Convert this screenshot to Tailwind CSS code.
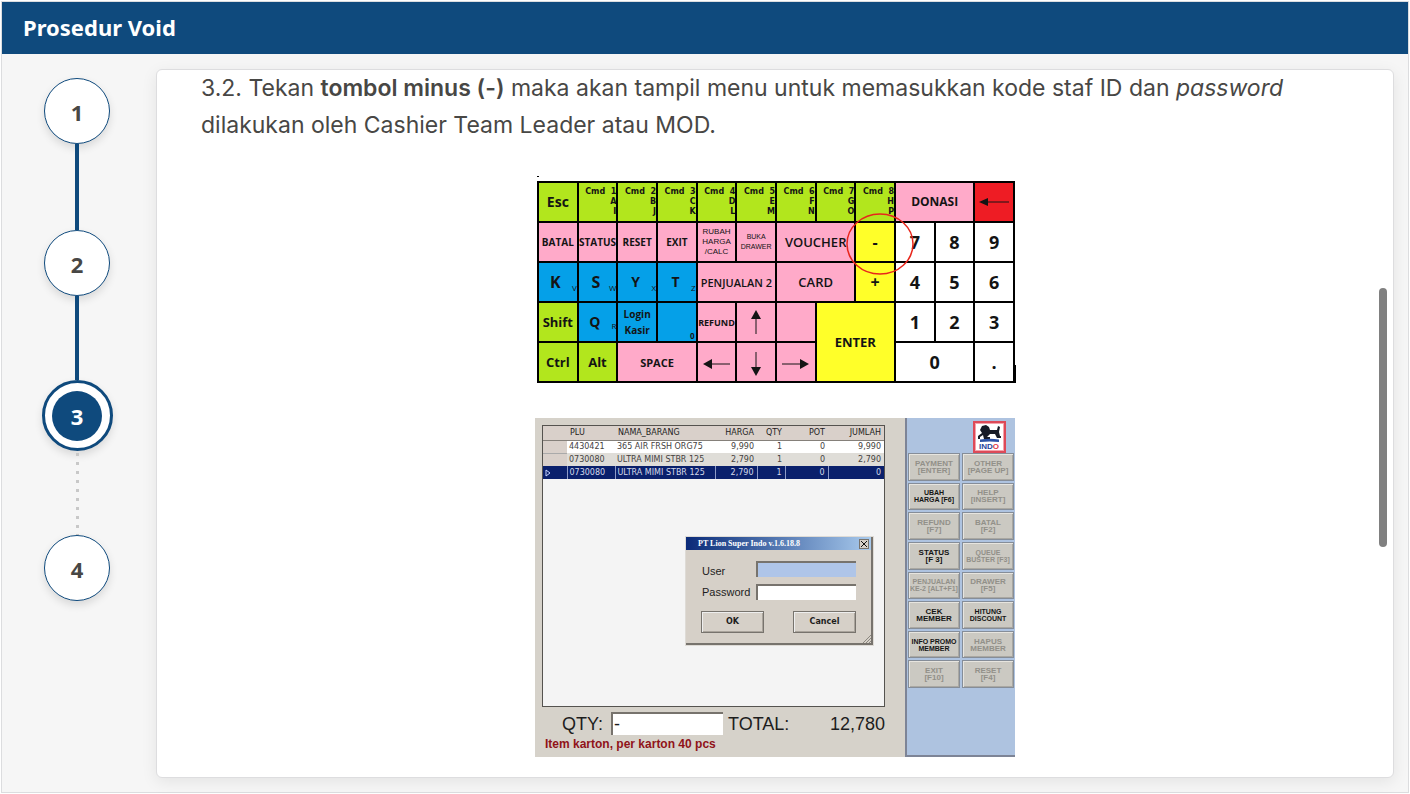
<!DOCTYPE html>
<html lang="id">
<head>
<meta charset="utf-8">
<meta name="viewport" content="width=device-width, initial-scale=1">
<title>Prosedur Void</title>
<script src="https://cdn.jsdelivr.net/npm/@tailwindcss/browser@4"></script>
</head>
<body class="bg-white">
<div class="flex min-h-screen flex-col p-px">
<div class="flex flex-1 flex-col border border-[#dcdddf] bg-[#f6f6f6]">
  <header class="flex h-[52px] items-center bg-[#0f4a7d] px-[21px]">
    <h1 class="pb-[2px] font-['Noto_Sans',sans-serif] text-[22px] font-bold text-white">Prosedur Void</h1>
  </header>
  <div class="flex flex-1 pt-[15px] pr-[14px] pb-[14px]">
    <nav aria-label="Langkah" class="flex w-[154px] shrink-0 flex-col items-center pt-[9px] pr-1 font-['Noto_Sans',sans-serif] text-[22px] font-bold text-[#484745]">
      <button class="size-[66px] shrink-0 rounded-full border border-[#0f4a7d] bg-white pt-[2px] shadow-[0_4px_8px_rgba(0,0,0,0.12)]">1</button>
      <div class="h-[86px] w-1 shrink-0 bg-[#0f4a7d]"></div>
      <button class="size-[66px] shrink-0 rounded-full border border-[#0f4a7d] bg-white pt-[2px] shadow-[0_4px_8px_rgba(0,0,0,0.12)]">2</button>
      <div class="h-[84px] w-1 shrink-0 bg-[#0f4a7d]"></div>
      <button aria-current="step" class="flex size-[71px] shrink-0 items-center justify-center rounded-full border-[3px] border-[#0f4a7d] bg-white text-white shadow-[0_4px_8px_rgba(0,0,0,0.12)]"><span class="flex size-[50px] items-center justify-center rounded-full bg-[#0f4a7d] pt-[2px]">3</span></button>
      <div class="h-[84px] w-[3px] shrink-0 bg-[repeating-linear-gradient(to_bottom,transparent_0_2px,#c8c8c8_2px_5px,transparent_5px_9px)]"></div>
      <button class="size-[66px] shrink-0 rounded-full border border-[#0f4a7d] bg-white pt-[2px] shadow-[0_4px_8px_rgba(0,0,0,0.12)]">4</button>
    </nav>

    <main id="isi" class="relative flex min-w-0 flex-1 flex-col items-center rounded-md border border-[#dddddf] bg-white pb-5 shadow-[0_4px_16px_rgba(0,0,0,0.08)]">
      <p class="w-full px-11 font-[Inter,sans-serif] text-[23px] leading-[37px] text-[#484745]">3.2. Tekan <b class="font-semibold">tombol minus (-)</b> maka akan tampil menu untuk memasukkan kode staf ID dan <i>password</i><br>dilakukan oleh Cashier Team Leader atau MOD.</p>

      <!-- Cash register keyboard -->
      <div class="mt-8 flex w-[482px] items-end pl-[3px]">
        <div class="flex-1">
          <div class="mb-1 h-px w-[2px] bg-black"></div>
          <div class="relative grid w-[478px] grid-cols-12 grid-rows-[repeat(5,38px)] gap-[2px] bg-black p-[2px] font-['Open_Sans',sans-serif] text-[11px] leading-none font-bold text-[#141414] [&>button]:min-w-0 [&>button]:overflow-hidden [&>button]:whitespace-nowrap">
            <button class="bg-[#b2e61d] text-sm leading-none">Esc</button>
            <button class="bg-[#b2e61d] text-right font-['DejaVu_Sans',sans-serif] text-[8px] leading-[10px]">Cmd&nbsp; 1<br>A<br>I</button>
            <button class="bg-[#b2e61d] text-right font-['DejaVu_Sans',sans-serif] text-[8px] leading-[10px]">Cmd&nbsp; 2<br>B<br>J</button>
            <button class="bg-[#b2e61d] text-right font-['DejaVu_Sans',sans-serif] text-[8px] leading-[10px]">Cmd&nbsp; 3<br>C<br>K</button>
            <button class="bg-[#b2e61d] text-right font-['DejaVu_Sans',sans-serif] text-[8px] leading-[10px]">Cmd&nbsp; 4<br>D<br>L</button>
            <button class="bg-[#b2e61d] text-right font-['DejaVu_Sans',sans-serif] text-[8px] leading-[10px]">Cmd&nbsp; 5<br>E<br>M</button>
            <button class="bg-[#b2e61d] text-right font-['DejaVu_Sans',sans-serif] text-[8px] leading-[10px]">Cmd&nbsp; 6<br>F<br>N</button>
            <button class="bg-[#b2e61d] text-right font-['DejaVu_Sans',sans-serif] text-[8px] leading-[10px]">Cmd&nbsp; 7<br>G<br>O</button>
            <button class="bg-[#b2e61d] text-right font-['DejaVu_Sans',sans-serif] text-[8px] leading-[10px]">Cmd&nbsp; 8<br>H<br>P</button>
            <button class="col-span-2 bg-[#ffaac9] text-xs leading-none">DONASI</button>
            <button aria-label="Hapus" class="flex items-center justify-center bg-[#ee1c24]"><svg width="30" height="10" viewBox="0 0 30 10"><path d="M8 5H30" stroke="#141414"/><path d="M0 5l9-4v8z" fill="#141414"/></svg></button>

            <button class="bg-[#ffaac9] text-[10px]">BATAL</button>
            <button class="bg-[#ffaac9] text-[10px]">STATUS</button>
            <button class="bg-[#ffaac9] text-[10px]">RESET</button>
            <button class="bg-[#ffaac9] text-[10px]">EXIT</button>
            <button class="bg-[#ffaac9] font-['Liberation_Sans',sans-serif] text-[8px] leading-[10px] font-normal">RUBAH<br>HARGA<br>/CALC</button>
            <button class="bg-[#ffaac9] font-['Liberation_Sans',sans-serif] text-[7px] leading-[10px] font-normal">BUKA<br>DRAWER</button>
            <button class="col-span-2 bg-[#ffaac9] text-[13px] font-semibold">VOUCHER</button>
            <button class="bg-[#ffff29] text-base">-</button>
            <button class="bg-white text-lg">7</button>
            <button class="bg-white text-lg">8</button>
            <button class="bg-white text-lg">9</button>

            <button class="flex items-center justify-end bg-[#05a0e8] text-base leading-none">K<span class="mt-3 ml-1 w-3 text-right text-[8px] font-normal">V</span></button>
            <button class="flex items-center justify-end bg-[#05a0e8] text-base leading-none">S<span class="mt-3 ml-1 w-3 text-right text-[8px] font-normal">W</span></button>
            <button class="flex items-center justify-end bg-[#05a0e8] text-sm leading-none">Y<span class="mt-3 ml-1 w-3 text-right text-[8px] font-normal">X</span></button>
            <button class="flex items-center justify-end bg-[#05a0e8] text-sm leading-none">T<span class="mt-3 ml-1 w-3 text-right text-[8px] font-normal">Z</span></button>
            <button class="col-span-2 bg-[#ffaac9] text-[11px] font-semibold">PENJUALAN 2</button>
            <button class="col-span-2 bg-[#ffaac9] text-[13px] font-semibold">CARD</button>
            <button class="bg-[#ffff29] text-base">+</button>
            <button class="bg-white text-lg">4</button>
            <button class="bg-white text-lg">5</button>
            <button class="bg-white text-lg">6</button>

            <button class="bg-[#b2e61d] text-[13px]">Shift</button>
            <button class="flex items-center justify-end bg-[#05a0e8] text-sm leading-none">Q<span class="mt-2 ml-1 w-3 text-right text-[8px] font-normal">R</span></button>
            <button class="bg-[#05a0e8] text-[10px] leading-4">Login<br>Kasir</button>
            <button class="flex items-end justify-end bg-[#05a0e8] p-px text-[8px]">0</button>
            <button class="bg-[#ffaac9] text-[9px]">REFUND</button>
            <button aria-label="Atas" class="flex items-center justify-center bg-[#ffaac9]"><svg width="10" height="24" viewBox="0 0 10 24"><path d="M5 8V24" stroke="#141414"/><path d="M5 0l5 9H0z" fill="#141414"/></svg></button>
            <button aria-label="Kosong" class="bg-[#ffaac9]"></button>
            <button class="col-span-2 row-span-2 bg-[#ffff29] text-[13px]">ENTER</button>
            <button class="bg-white text-lg">1</button>
            <button class="bg-white text-lg">2</button>
            <button class="bg-white text-lg">3</button>

            <button class="bg-[#b2e61d] text-[13px]">Ctrl</button>
            <button class="bg-[#b2e61d] text-[13px]">Alt</button>
            <button class="col-span-2 bg-[#ffaac9]">SPACE</button>
            <button aria-label="Kiri" class="flex items-center justify-center bg-[#ffaac9] pt-1"><svg width="27" height="10" viewBox="0 0 27 10"><path d="M8 5H27" stroke="#141414"/><path d="M0 5l9-5v10z" fill="#141414"/></svg></button>
            <button aria-label="Bawah" class="flex items-center justify-center bg-[#ffaac9] pt-1"><svg width="10" height="24" viewBox="0 0 10 24"><path d="M5 0V16" stroke="#141414"/><path d="M5 24l5-9H0z" fill="#141414"/></svg></button>
            <button aria-label="Kanan" class="flex items-center justify-center bg-[#ffaac9] pt-1"><svg width="27" height="10" viewBox="0 0 27 10"><path d="M0 5H19" stroke="#141414"/><path d="M27 5l-9-5v10z" fill="#141414"/></svg></button>
            <button class="col-span-2 bg-white text-lg">0</button>
            <button class="bg-white text-lg">.</button>
            <svg class="pointer-events-none absolute top-[32px] left-[309px]" width="68" height="62" viewBox="0 0 68 62" fill="none"><ellipse cx="34" cy="31" rx="33" ry="30" stroke="#e8261c" stroke-width="1.5"/></svg>
          </div>
        </div>
        <div class="h-[18px] w-px shrink-0 bg-black"></div>
      </div>

      <!-- Cashier application -->
      <div class="mt-[35px] flex w-[480px] bg-[#d6d2ca] font-['DejaVu_Sans',sans-serif] text-[#1d1d1d]">
        <div class="min-w-0 flex-1 pt-[7px] pr-5 pb-1 pl-[7px]">
          <div class="relative h-[282px] border border-[#55534f] bg-[#f4f4f4]">
            <table class="w-full table-fixed border-collapse text-right text-[8px] leading-3 whitespace-nowrap text-[#45423f] [&_td]:pr-[3px] [&_th]:pr-[3px]">
              <colgroup><col class="w-6"><col class="w-12"><col class="w-[100px]"><col class="w-[42px]"><col class="w-7"><col class="w-[43px]"><col></colgroup>
              <thead><tr class="h-[14px] border-b border-[#85807a] bg-[#d9d0ca] text-[#1d1d1d]"><th></th><th class="pl-[3px] text-left font-medium">PLU</th><th class="pl-[3px] text-left font-medium">NAMA_BARANG</th><th class="font-medium">HARGA</th><th class="font-medium">QTY</th><th class="font-medium">POT</th><th class="font-medium">JUMLAH</th></tr></thead>
              <tbody>
                <tr class="h-[13px] bg-white"><td class="border-b border-[#aaa] bg-[#d9d0ca]"></td><td class="pl-[2px] text-left">4430421</td><td class="pl-[2px] text-left">365 AIR FRSH ORG75</td><td>9,990</td><td>1</td><td>0</td><td>9,990</td></tr>
                <tr class="h-[13px] bg-[#dfddd8]"><td class="bg-[#d9d0ca]"></td><td class="pl-[2px] text-left">0730080</td><td class="pl-[2px] text-left">ULTRA MIMI STBR 125</td><td>2,790</td><td>1</td><td>0</td><td>2,790</td></tr>
                <tr class="h-[13px] divide-x divide-[#8e9bc8] bg-[#0a206c] text-[#d5daea]"><td><svg class="ml-[2px]" width="6" height="8" viewBox="0 0 6 8"><path d="M1 1l4 3-4 3z" fill="none" stroke="#c7d4ff"/></svg></td><td class="pl-[2px] text-left">0730080</td><td class="pl-[2px] text-left">ULTRA MIMI STBR 125</td><td>2,790</td><td>1</td><td>0</td><td>0</td></tr>
              </tbody>
            </table>

            <!-- Login window laid over the item list -->
            <form class="absolute top-[111px] left-[143px] w-[187px] border-r-2 border-b-2 border-[#77736d] bg-[#d6d0c8] pb-[10px] font-['Liberation_Sans',sans-serif] text-[11px] outline outline-[#dedbd6]">
              <div class="flex h-[13px] items-center justify-between bg-linear-to-r from-[#0b2a78] to-[#a9caec] pr-[2px] pl-3 font-['Liberation_Serif',serif] text-[8px] leading-none font-bold text-white"><span>PT Lion Super Indo v.1.6.18.8</span><button type="button" aria-label="Tutup" class="flex size-[10px] items-center justify-center border border-[#77736d] bg-[#d6d0c8]"><svg width="6" height="6" viewBox="0 0 6 6"><path d="M0 0l6 6M6 0L0 6" stroke="#111"/></svg></button></div>
              <div class="grid grid-cols-[54px_100px] gap-y-[5px] pt-[11px] pl-4 leading-4">
                <label for="user" class="pt-[2px]">User</label><input id="user" class="h-4 w-full border-t-2 border-l-2 border-[#77736d] bg-[#afc5e8]">
                <label for="pass">Password</label><input id="pass" type="password" class="h-4 w-full border-t-2 border-l-2 border-[#77736d] bg-white">
              </div>
              <div class="mt-[11px] flex justify-between pr-[15px] pl-[15px] font-['DejaVu_Sans',sans-serif] text-[8px] font-semibold">
                <button type="button" class="h-[22px] w-[63px] border border-[#77736d] shadow-[inset_1px_1px_0_#eee,inset_-1px_-1px_0_#aaa49c]">OK</button>
                <button type="button" class="h-[22px] w-[63px] border border-[#77736d] shadow-[inset_1px_1px_0_#eee,inset_-1px_-1px_0_#aaa49c]">Cancel</button>
              </div>
              <svg class="absolute right-0 bottom-0" width="9" height="9" viewBox="0 0 9 9"><path d="M1 9l8-8M4 9l5-5M7 9l2-2" stroke="#8b877f"/></svg>
            </form>
          </div>
          <div class="mt-[5px] flex items-center font-['Liberation_Sans',sans-serif] text-[18px] leading-[20px]">
            <label for="qty" class="w-[69px] pl-5">QTY:</label>
            <input id="qty" value="-" class="h-[23px] w-[112px] border-t-2 border-l-2 border-[#77736d] bg-white pl-px">
            <span class="pl-[5px]">TOTAL:</span>
            <span class="ml-auto">12,780</span>
          </div>
          <p class="mt-px pl-[3px] font-['Liberation_Sans',sans-serif] text-[12px] leading-[17px] font-bold text-[#901319]">Item karton, per karton 40 pcs</p>
        </div>

        <aside class="w-[110px] shrink-0 border-b-2 border-l-2 border-[#7d8496] bg-[#aec3e0] pr-px pl-px">
          <svg class="mt-[3px] ml-[65px]" width="33" height="32" viewBox="0 0 33 32" role="img" aria-label="Super Indo">
            <rect width="33" height="32" fill="#dd4a58"/>
            <rect x="2.500" y="2.500" width="28" height="27" fill="#fff" stroke="#f5a3ab"/>
            <path d="M7 9l2-4 4-1 3 2 1 3h7l1-4 2 1-1 5 1 4h1v2h-4l-2-4h-5l-3 3h3v2h-6l-1-4-3 2v2H5v-3l4-3z" fill="#161a26"/>
            <path d="M7 18.500q10-1.500 19 0v2.500q-9-1-19 0z" fill="#2c52a5"/>
            <text x="6" y="28" font-family="Liberation Sans, sans-serif" font-size="8" font-weight="700" fill="#26469d">IND<tspan fill="#e33b44">O</tspan></text>
          </svg>
          <div class="grid h-[235px] grid-cols-[52px_1fr] grid-rows-8 gap-[2px] font-['Liberation_Sans',sans-serif] text-[8px] leading-[7px] font-bold text-[#151515] [&>button]:overflow-hidden [&>button]:border [&>button]:border-[#858d98] [&>button]:bg-[#cbc9c2] [&>button]:whitespace-nowrap [&>button]:shadow-[inset_1px_1px_0_#e7e5df,inset_-1px_-1px_0_#aaa8a2] [&>button:disabled]:text-[#929089]">
            <button disabled>PAYMENT<br>[ENTER]</button><button disabled>OTHER<br>[PAGE UP]</button>
            <button class="text-[7px]">UBAH<br>HARGA [F6]</button><button disabled>HELP<br>[INSERT]</button>
            <button disabled>REFUND<br>[F7]</button><button disabled>BATAL<br>[F2]</button>
            <button>STATUS<br>[F 3]</button><button disabled class="text-[7px]">QUEUE<br>BUSTER [F3]</button>
            <button disabled class="text-[7px]">PENJUALAN<br>KE-2 [ALT+F1]</button><button disabled>DRAWER<br>[F5]</button>
            <button>CEK<br>MEMBER</button><button class="text-[7px]">HITUNG<br>DISCOUNT</button>
            <button class="text-[7px]">INFO PROMO<br>MEMBER</button><button disabled>HAPUS<br>MEMBER</button>
            <button disabled>EXIT<br>[F10]</button><button disabled>RESET<br>[F4]</button>
          </div>
        </aside>
      </div>

      <div role="scrollbar" aria-controls="isi" aria-valuenow="50" aria-orientation="vertical" class="absolute top-[218px] right-[6px] h-[259px] w-2 rounded-full bg-[#808080]"></div>
    </main>
  </div>
</div>
</div>
</body>
</html>
